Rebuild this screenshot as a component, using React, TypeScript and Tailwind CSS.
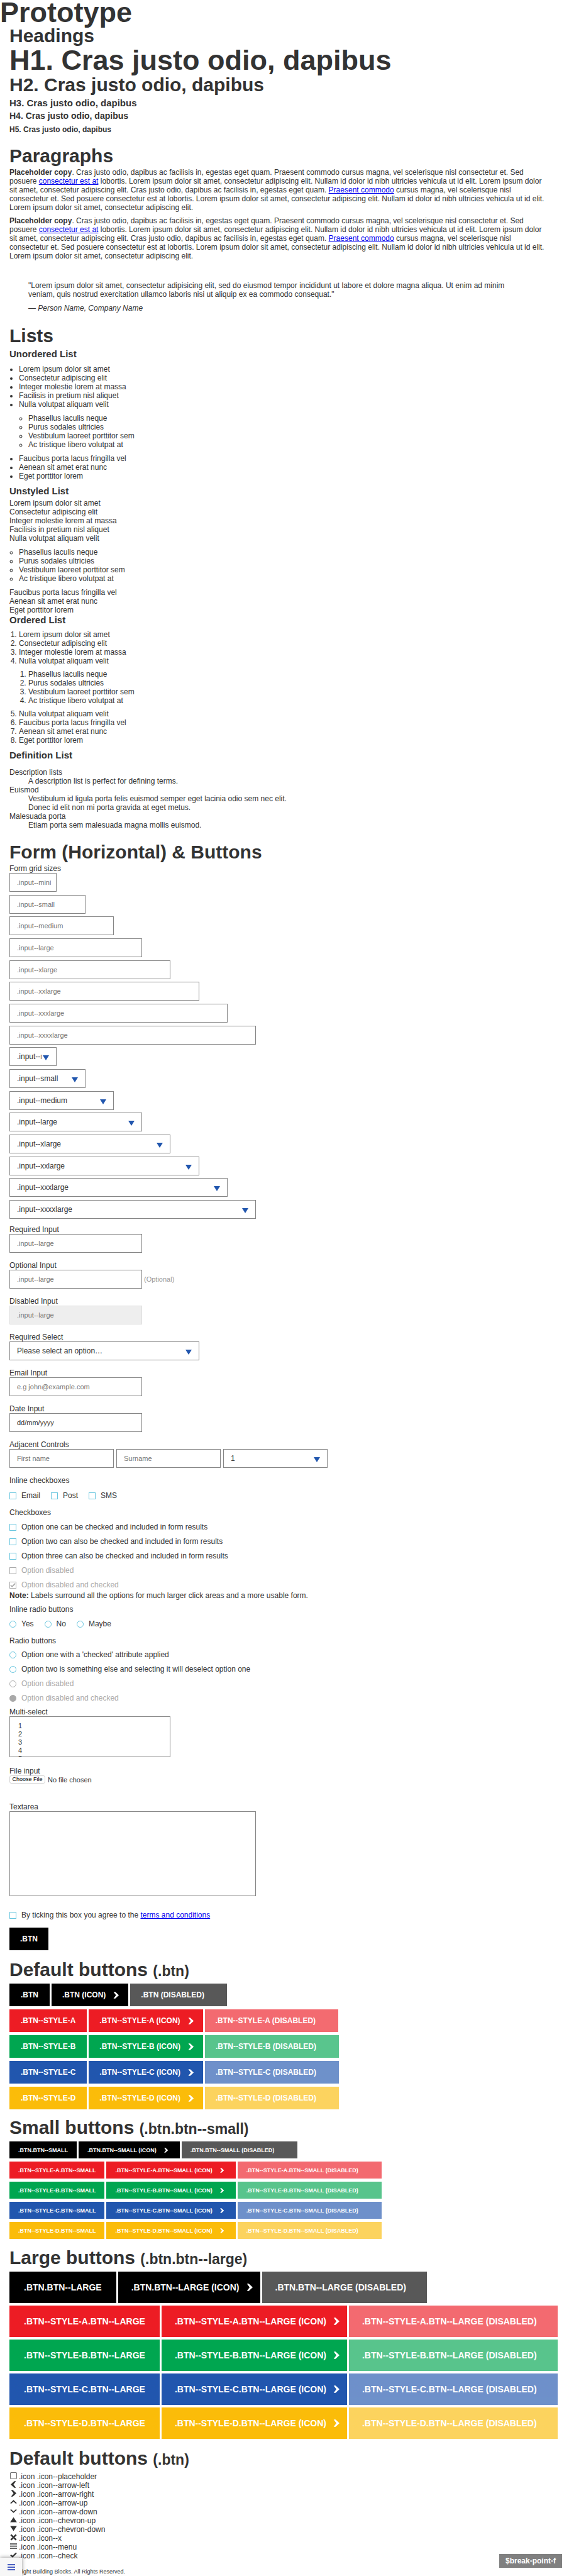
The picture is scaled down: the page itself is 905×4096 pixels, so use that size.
import React, { useId } from "react";

type IconName =
  | "placeholder"
  | "arrow-left"
  | "arrow-right"
  | "arrow-up"
  | "arrow-down"
  | "chevron-up"
  | "chevron-down"
  | "x"
  | "menu"
  | "check";

const SHAPES: Record<IconName, React.ReactNode> = {
  placeholder: <rect x="0.5" y="0.5" width="13" height="13" rx="2" fill="none" stroke="currentColor" />,
  "arrow-left": <path d="M12 .3H8.4L1.2 7l7.2 6.7H12L7 7z" />,
  "arrow-right": <path d="M2 .3h3.6L12.8 7l-7.2 6.7H2L7 7z" />,
  "arrow-up": <path d="M1.2 9.6 7 4.2l5.8 5.4" fill="none" stroke="currentColor" strokeWidth="2.3" />,
  "arrow-down": <path d="M1.2 4.2 7 9.6l5.8-5.4" fill="none" stroke="currentColor" strokeWidth="2.3" />,
  "chevron-up": <path d="M7 2l6.8 10H.2z" />,
  "chevron-down": <path d="M7 12L.2 2h13.6z" />,
  x: <path d="M1.7 1.7l10.6 10.6M12.3 1.7L1.7 12.3" fill="none" stroke="currentColor" strokeWidth="3.3" />,
  menu: <path d="M0 1.6h14v1.9H0zM0 6h14v1.9H0zM0 10.4h14v1.9H0z" />,
  check: <path d="M1.2 7.2 5 10.6l7.8-7.8" fill="none" stroke="currentColor" strokeWidth="2.8" />,
};

function Icon({ name, className }: { name: IconName; className: string }) {
  return (
    <svg viewBox="0 0 14 14" fill="currentColor" aria-hidden="true" className={"block shrink-0 " + className}>
      {SHAPES[name]}
    </svg>
  );
}

const LINK = "text-[#0000ee] underline";
const H2 = "text-[30px] leading-[34px] font-bold";
const H3 = "text-[15px] leading-[18px] font-bold";

function Copy() {
  return (
    <p>
      <strong>Placeholder copy</strong>. Cras justo odio, dapibus ac facilisis in, egestas eget quam. Praesent commodo
      cursus magna, vel scelerisque nisl consectetur et. Sed posuere&nbsp;
      <a href="#consectetur" className={LINK}>consectetur est at</a> lobortis. Lorem ipsum dolor sit amet, consectetur
      adipiscing elit. Nullam id dolor id nibh ultricies vehicula ut id elit. Lorem ipsum dolor sit amet, consectetur
      adipiscing elit. Cras justo odio, dapibus ac facilisis in, egestas eget quam.{" "}
      <a href="#praesent" className={LINK}>Praesent commodo</a> cursus magna, vel scelerisque nisl consectetur et. Sed
      posuere consectetur est at lobortis. Lorem ipsum dolor sit amet, consectetur adipiscing elit. Nullam id dolor id
      nibh ultricies vehicula ut id elit. Lorem ipsum dolor sit amet, consectetur adipiscing elit.
    </p>
  );
}

const NESTED = ["Phasellus iaculis neque", "Purus sodales ultricies", "Vestibulum laoreet porttitor sem", "Ac tristique libero volutpat at"];
const TAIL = ["Faucibus porta lacus fringilla vel", "Aenean sit amet erat nunc", "Eget porttitor lorem"];

function Items({ items }: { items: string[] }) {
  return (
    <>
      {items.map((t) => (
        <li key={t}>{t}</li>
      ))}
    </>
  );
}

const SIZES: [string, string][] = [
  ["mini", "w-[75px]"],
  ["small", "w-[121px]"],
  ["medium", "w-[166px]"],
  ["large", "w-[211px]"],
  ["xlarge", "w-[256px]"],
  ["xxlarge", "w-[302px]"],
  ["xxxlarge", "w-[347px]"],
  ["xxxxlarge", "w-[392px]"],
];

const FIELD = "block h-[30px] rounded-none border border-[#858585] bg-white pl-[11px] text-[#333333] outline-none";

function TextBox({ width, className = "", ...rest }: { width: string } & React.InputHTMLAttributes<HTMLInputElement>) {
  return (
    <input
      type="text"
      {...rest}
      className={`${FIELD} pr-[8px] text-[11px] placeholder:text-[#757575] ${width} ${className}`}
    />
  );
}

function Select({
  width,
  options,
  ...rest
}: { width: string; options: string[] } & React.SelectHTMLAttributes<HTMLSelectElement>) {
  return (
    <div className={"relative " + width}>
      <select {...rest} className={`${FIELD} w-full appearance-none pr-[23px] text-[12px]`}>
        {options.map((o) => (
          <option key={o}>{o}</option>
        ))}
      </select>
      <svg
        viewBox="0 0 10 8"
        aria-hidden="true"
        className="pointer-events-none absolute top-[13px] right-[12px] h-[8px] w-[10px] fill-[#2156ae]"
      >
        <path d="M0 0h10L5 8z" />
      </svg>
    </div>
  );
}

function Field({ label, children }: { label: string; children: (id: string) => React.ReactNode }) {
  const id = useId();
  return (
    <div className="mb-[13px]">
      <label htmlFor={id} className="block">{label}</label>
      {children(id)}
    </div>
  );
}

function Choice({
  type,
  name,
  disabled,
  checked,
  children,
}: {
  type: "checkbox" | "radio";
  name: string;
  disabled?: boolean;
  checked?: boolean;
  children: React.ReactNode;
}) {
  const tone = disabled ? "border-[#a9a9a9]" : "border-[#66c5de]";
  const shape = type === "radio" ? "rounded-full checked:bg-[#a9a9a9]" : "";
  return (
    <label className={"relative flex items-center gap-2 " + (disabled ? "text-[#a9a9a9]" : "")}>
      <input
        type={type}
        name={name}
        disabled={disabled}
        defaultChecked={checked}
        className={`m-0 block size-[11px] shrink-0 appearance-none border bg-white ${tone} ${shape}`}
      />
      {checked && type === "checkbox" && (
        <Icon name="check" className="pointer-events-none absolute left-[1px] size-[9px]" />
      )}
      <span>{children}</span>
    </label>
  );
}

const BTN_SIZES = {
  default: { box: "h-[36px] text-[12px]", plain: "px-[18px]", wide: "pl-[17px] pr-[14px] gap-[11px]", icon: "size-[11px]", rows: "gap-[5px]" },
  small: { box: "h-[27px] text-[9px]", plain: "px-[14px]", wide: "pl-[14px] pr-[18px] gap-[11px]", icon: "size-[8px]", rows: "gap-[5px]" },
  large: { box: "h-[50px] text-[14px]", plain: "px-[23px]", wide: "pl-[21px] pr-[11px] gap-[10px]", icon: "size-[12px]", rows: "gap-[4px]" },
};

const BTN_STYLES: [string, string][] = [
  ["", "bg-black"],
  ["--style-a", "bg-[#ed1c24]"],
  ["--style-b", "bg-[#00a650]"],
  ["--style-c", "bg-[#2156ae]"],
  ["--style-d", "bg-[#fbbc09]"],
];

const BTN = "flex items-center font-bold whitespace-nowrap text-white uppercase";

function ButtonTable({ size }: { size: keyof typeof BTN_SIZES }) {
  const s = BTN_SIZES[size];
  const suffix = size === "default" ? "" : ".btn--" + size;
  return (
    <div className={"flex flex-col " + s.rows}>
      {BTN_STYLES.map(([style, color]) => {
        const text = ".btn" + style + suffix;
        return (
          <div key={style} className="flex gap-[3px]">
            <button type="button" className={`${BTN} ${s.box} ${s.plain} ${color}`}>{text}</button>
            <button type="button" className={`${BTN} ${s.box} ${s.wide} ${color}`}>
              {text} (icon)
              <Icon name="arrow-right" className={s.icon} />
            </button>
            <button type="button" disabled className={`${BTN} ${s.box} ${s.wide} ${color} opacity-65`}>
              {text} (disabled)
              <span className={"block shrink-0 " + s.icon} />
            </button>
          </div>
        );
      })}
    </div>
  );
}

function ButtonHeading({ children, selector }: { children: React.ReactNode; selector: string }) {
  return (
    <h2 className={H2 + " mb-[5px]"}>
      {children} <small className="text-[23px] leading-none">({selector})</small>
    </h2>
  );
}

export default function App() {
  return (
    <div className="min-h-screen bg-white font-['Liberation_Sans',Arial,sans-serif] text-[12px] leading-[14px] text-[#333333]">
      <h1 className="text-[45px] leading-[40px] font-bold">Prototype</h1>
      <main className="px-[15px]">
        <section>
          <h2 className={H2}>Headings</h2>
          <h1 className="mt-[2px] text-[45px] leading-[40px] font-bold">H1. Cras justo odio, dapibus</h1>
          <h2 className={H2 + " mt-[2px]"}>H2. Cras justo odio, dapibus</h2>
          <h3 className={H3 + " mt-[3px]"}>H3. Cras justo odio, dapibus</h3>
          <h4 className="mt-[2px] text-[14px] leading-[18px] font-bold">H4. Cras justo odio, dapibus</h4>
          <h5 className="mt-[6px] font-bold">H5. Cras justo odio, dapibus</h5>
        </section>

        <section className="mt-[18px]">
          <h2 className={H2}>Paragraphs</h2>
          <div className="mt-[2px] flex flex-col gap-[7px] pr-[17px]">
            <Copy />
            <Copy />
          </div>
          <blockquote className="mt-[33px] pr-[46px] pl-[30px]">
            <p>
              "Lorem ipsum dolor sit amet, consectetur adipisicing elit, sed do eiusmod tempor incididunt ut labore et
              dolore magna aliqua. Ut enim ad minim veniam, quis nostrud exercitation ullamco laboris nisi ut aliquip ex
              ea commodo consequat."
            </p>
            <cite className="mt-[8px] block">— Person Name, Company Name</cite>
          </blockquote>
        </section>

        <section className="mt-[20px]">
          <h2 className={H2}>Lists</h2>
          <h3 className={H3 + " mt-[3px]"}>Unordered List</h3>
          <ul className="mt-[8px] list-disc pl-[15px]">
            <Items items={["Lorem ipsum dolor sit amet", "Consectetur adipiscing elit", "Integer molestie lorem at massa", "Facilisis in pretium nisl aliquet"]} />
            <li>
              Nulla volutpat aliquam velit
              <ul className="my-[8px] list-[circle] pl-[15px]">
                <Items items={NESTED} />
              </ul>
            </li>
            <Items items={TAIL} />
          </ul>
          <h3 className={H3 + " mt-[8px]"}>Unstyled List</h3>
          <ul className="mt-[3px]">
            <Items items={["Lorem ipsum dolor sit amet", "Consectetur adipiscing elit", "Integer molestie lorem at massa", "Facilisis in pretium nisl aliquet"]} />
            <li>
              Nulla volutpat aliquam velit
              <ul className="my-[8px] list-[circle] pl-[15px]">
                <Items items={NESTED} />
              </ul>
            </li>
            <Items items={TAIL} />
          </ul>
          <h3 className={H3}>Ordered List</h3>
          <ol className="mt-[7px] list-decimal pl-[15px]">
            <Items items={["Lorem ipsum dolor sit amet", "Consectetur adipiscing elit", "Integer molestie lorem at massa"]} />
            <li>
              Nulla volutpat aliquam velit
              <ol className="my-[7px] list-decimal pl-[15px]">
                <Items items={NESTED} />
              </ol>
            </li>
            <Items items={["Nulla volutpat aliquam velit", ...TAIL]} />
          </ol>
          <h3 className={H3 + " mt-[8px]"}>Definition List</h3>
          <dl className="mt-[11px]">
            <dt>Description lists</dt>
            <dd className="ml-[30px]">A description list is perfect for defining terms.</dd>
            <dt>Euismod</dt>
            <dd className="ml-[30px]">Vestibulum id ligula porta felis euismod semper eget lacinia odio sem nec elit.</dd>
            <dd className="ml-[30px]">Donec id elit non mi porta gravida at eget metus.</dd>
            <dt>Malesuada porta</dt>
            <dd className="ml-[30px]">Etiam porta sem malesuada magna mollis euismod.</dd>
          </dl>
        </section>

        <form className="mt-[19px]" onSubmit={(e) => e.preventDefault()}>
          <h2 className={H2}>Form (Horizontal) &amp; Buttons</h2>
          <fieldset className="mt-[2px] mb-[10px]">
            <legend>Form grid sizes</legend>
            {SIZES.map(([n, w]) => (
              <div key={n} className="mb-[5px] nth-[3n]:mb-[4px]">
                <TextBox width={w} placeholder={".input--" + n} aria-label={"Text " + n} />
              </div>
            ))}
            {SIZES.map(([n, w]) => (
              <div key={"s" + n} className="mb-[5px] nth-[3n]:mb-[4px] last:mb-0">
                <Select width={w} options={[".input--" + n]} aria-label={"Select " + n} />
              </div>
            ))}
          </fieldset>

          <Field label="Required Input">
            {(id) => <TextBox id={id} width="w-[211px]" placeholder=".input--large" required />}
          </Field>
          <Field label="Optional Input">
            {(id) => (
              <div className="flex items-center gap-[3px]">
                <TextBox id={id} width="w-[211px]" placeholder=".input--large" />
                <span className="text-[11px] text-[#999999]">(Optional)</span>
              </div>
            )}
          </Field>
          <Field label="Disabled Input">
            {(id) => (
              <input
                id={id}
                type="text"
                disabled
                placeholder=".input--large"
                className="block h-[30px] w-[211px] border border-[#dddddd] bg-[#eeeeee] px-[11px] text-[11px] placeholder:text-[#757575]"
              />
            )}
          </Field>
          <Field label="Required Select">
            {(id) => <Select id={id} width="w-[302px]" options={["Please select an option…"]} required />}
          </Field>
          <Field label="Email Input">
            {(id) => <TextBox id={id} type="email" width="w-[211px]" placeholder="e.g john@example.com" />}
          </Field>
          <Field label="Date Input">
            {(id) => (
              <input
                id={id}
                type="text"
                inputMode="numeric"
                placeholder="dd/mm/yyyy"
                className={`${FIELD} w-[211px] pr-[11px] text-[11px] placeholder:text-[#333333]`}
              />
            )}
          </Field>
          <Field label="Adjacent Controls">
            {(id) => (
              <div className="flex gap-[4px]">
                <TextBox id={id} width="w-[166px]" placeholder="First name" />
                <TextBox width="w-[166px]" placeholder="Surname" aria-label="Surname" />
                <Select width="w-[166px]" options={["1", "2", "3", "4", "5"]} aria-label="Number" />
              </div>
            )}
          </Field>

          <fieldset className="mb-[13px] pt-[2px]">
            <legend className="mb-[8px]">Inline checkboxes</legend>
            <div className="flex gap-[17px]">
              <Choice type="checkbox" name="contact">Email</Choice>
              <Choice type="checkbox" name="contact">Post</Choice>
              <Choice type="checkbox" name="contact">SMS</Choice>
            </div>
          </fieldset>
          <fieldset>
            <legend className="mb-[9px]">Checkboxes</legend>
            <div className="flex flex-col gap-[9px]">
              <Choice type="checkbox" name="options">Option one can be checked and included in form results</Choice>
              <Choice type="checkbox" name="options">Option two can also be checked and included in form results</Choice>
              <Choice type="checkbox" name="options">Option three can also be checked and included in form results</Choice>
              <Choice type="checkbox" name="options" disabled>Option disabled</Choice>
              <Choice type="checkbox" name="options" disabled checked>Option disabled and checked</Choice>
            </div>
          </fieldset>
          <p className="mt-[3px] mb-[8px]">
            <strong>Note:</strong> Labels surround all the options for much larger click areas and a more usable form.
          </p>
          <fieldset className="mb-[13px]">
            <legend className="mb-[9px]">Inline radio buttons</legend>
            <div className="flex gap-[17px]">
              <Choice type="radio" name="answer">Yes</Choice>
              <Choice type="radio" name="answer">No</Choice>
              <Choice type="radio" name="answer">Maybe</Choice>
            </div>
          </fieldset>
          <fieldset className="mb-[8px]">
            <legend className="mb-[8px]">Radio buttons</legend>
            <div className="flex flex-col gap-[9px]">
              <Choice type="radio" name="radios">Option one with a 'checked' attribute applied</Choice>
              <Choice type="radio" name="radios">Option two is something else and selecting it will deselect option one</Choice>
              <Choice type="radio" name="radios-disabled" disabled>Option disabled</Choice>
              <Choice type="radio" name="radios-disabled" disabled checked>Option disabled and checked</Choice>
            </div>
          </fieldset>
          <Field label="Multi-select">
            {(id) => (
              <select
                id={id}
                multiple
                className="block h-[65px] w-[256px] border border-[#858585] bg-white px-[11px] py-[8px] text-[11px] text-[#333333] [scrollbar-width:none]"
              >
                {["1", "2", "3", "4", "5"].map((n) => (
                  <option key={n} className="h-[13px] min-h-0 px-[2px] py-0">{n}</option>
                ))}
              </select>
            )}
          </Field>
          <div className="mt-[15px] h-[57px]">
            <label htmlFor="file" className="block">File input</label>
            <input
              id="file"
              type="file"
              className="block h-[14px] text-[11px] leading-[14px] file:mr-[4px] file:h-[13px] file:w-[57px] file:rounded-[3px] file:border file:border-[#d4d4d4] file:bg-white file:p-0 file:text-center file:align-top file:text-[9px] file:leading-[11px] file:text-black"
            />
          </div>
          <Field label="Textarea">
            {(id) => (
              <textarea
                id={id}
                className="block h-[135px] w-[392px] resize-none border border-[#858585] bg-white p-[11px] text-[12px]"
              />
            )}
          </Field>
          <div className="pt-[10px]">
            <Choice type="checkbox" name="terms">
              By ticking this box you agree to the <a href="#terms" className={LINK}>terms and conditions</a>
            </Choice>
          </div>
          <button type="submit" className={`${BTN} mt-[13px] h-[36px] bg-black px-[17px] text-[12px]`}>.btn</button>
        </form>

        <section className="mt-[14px]">
          <ButtonHeading selector=".btn">Default buttons</ButtonHeading>
          <ButtonTable size="default" />
        </section>
        <section className="mt-[12px]">
          <ButtonHeading selector=".btn.btn--small">Small buttons</ButtonHeading>
          <ButtonTable size="small" />
        </section>
        <section className="mt-[13px]">
          <ButtonHeading selector=".btn.btn--large">Large buttons</ButtonHeading>
          <ButtonTable size="large" />
        </section>

        <section className="mt-[14px]">
          <ButtonHeading selector=".btn">Default buttons</ButtonHeading>
          <ul>
            {(Object.keys(SHAPES) as IconName[]).map((n) => (
              <li key={n} className="flex items-start gap-[3px] pl-[1px]">
                <Icon name={n} className="size-[11px]" />
                .icon .icon--{n}
              </li>
            ))}
          </ul>
        </section>
      </main>

      <footer className="mt-[12px] pl-[11px] text-[9px] leading-[12px]">Copyright Building Blocks. All Rights Reserved.</footer>

      <button
        type="button"
        aria-label="Menu"
        className="fixed bottom-0 left-0 flex h-[29px] w-[35px] flex-col items-center justify-center gap-[2px] bg-[#f7f7f7] shadow-[0_0_6px_rgba(0,0,0,0.45)]"
      >
        <span className="h-[2px] w-[12px] bg-[#4a5fc1]" />
        <span className="h-[2px] w-[12px] bg-[#4a5fc1]" />
        <span className="h-[2px] w-[12px] bg-[#4a5fc1]" />
      </button>
      <div className="fixed right-[11px] bottom-[13px] flex h-[22px] w-[100px] items-center justify-center bg-[#808080] font-bold text-white">
        $break-point-f
      </div>
    </div>
  );
}
